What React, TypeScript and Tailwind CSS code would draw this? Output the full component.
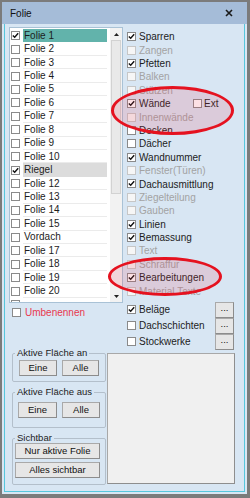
import React from "react";

const folien = [
  "Folie 1", "Folie 2", "Folie 3", "Folie 4", "Folie 5", "Folie 6", "Folie 7",
  "Folie 8", "Folie 9", "Folie 10", "Riegel", "Folie 12", "Folie 13", "Folie 14",
  "Folie 15", "Vordach", "Folie 17", "Folie 18", "Folie 19", "Folie 20", "",
];

// [label, checked, disabled]
const optionen: [string, boolean, boolean][] = [
  ["Sparren", true, false],
  ["Zangen", false, true],
  ["Pfetten", true, false],
  ["Balken", false, true],
  ["Stützen", false, true],
  ["Wände", true, false],
  ["Innenwände", false, true],
  ["Decken", false, false],
  ["Dächer", false, false],
  ["Wandnummer", true, false],
  ["Fenster(Türen)", false, true],
  ["Dachausmittlung", true, false],
  ["Ziegelteilung", false, true],
  ["Gauben", false, true],
  ["Linien", true, false],
  ["Bemassung", true, false],
  ["Text", false, true],
  ["Schraffur", false, true],
  ["Bearbeitungen", true, false],
  ["Material Texte", false, true],
];

function Box({ checked, disabled }: { checked?: boolean; disabled?: boolean }) {
  return (
    <span
      className={`w-[9px] h-[9px] shrink-0 border flex items-center justify-center ${
        disabled ? "border-[#c6c6c6] bg-[#f6f6f6]" : "border-[#8a8a8a] bg-white"
      }`}
    >
      {checked && (
        <svg width="7" height="7" viewBox="0 0 7 7">
          <path d="M0.8 3.4 L2.7 5.3 L6.2 1.2" fill="none" stroke="#111" strokeWidth="1.4" />
        </svg>
      )}
    </span>
  );
}

function Btn({ children, className }: { children: React.ReactNode; className: string }) {
  return (
    <div
      className={`h-[16px] flex items-center justify-center bg-[#e6e6e6] border border-[#a9a9a9] border-b-[#8c8c8c] border-r-[#8c8c8c] text-[9.5px] text-[#111] ${className}`}
    >
      {children}
    </div>
  );
}

export default function App() {
  return (
    <div className="relative w-[250px] h-[498px] bg-[#7b7b7b] pt-[2px] pl-[2px] pr-[3px] pb-[4px] font-['Liberation_Sans',Arial,sans-serif] text-[10px] text-[#1c1c1c]">
      <div className="h-full flex flex-col bg-[#d8e6f3]">
        {/* title bar */}
        <div className="h-[22px] shrink-0 bg-[#a5bcd8] flex items-center justify-between pl-[8px] pr-[14px]">
          <span className="text-[10px] text-[#111]">Folie</span>
          <svg width="8" height="8" viewBox="0 0 8 8">
            <path d="M1 1 L7 7 M7 1 L1 7" stroke="#1a1a1a" strokeWidth="1.6" />
          </svg>
        </div>

        <div className="flex-1 px-[2px] pb-[2px] flex flex-col">
          <div className="flex-1 border-l border-r border-b border-[#56c6dc] pt-[3px] pl-[4px] flex flex-col">
            {/* top section */}
            <div className="flex h-[320px] shrink-0">
              <div className="w-[114px] flex flex-col">
                {/* list */}
                <div className="h-[276px] border border-[#a9c2d6] bg-white flex overflow-hidden">
                  <div className="flex-1 pt-[1px]">
                    {folien.map((f, i) => (
                      <div key={i} className="h-[13.45px] flex items-center pl-[1px]">
                        <Box checked={i === 0 || f === "Riegel"} />
                        <div
                          className={`ml-[3px] w-[84px] h-full flex items-center pl-[1px] border-b ${
                            i === 0
                              ? "bg-[#62b3ab] border-[#62b3ab]"
                              : f === "Riegel"
                              ? "bg-[#dcdcdc] border-[#dcdcdc]"
                              : "border-[#ebebeb]"
                          }`}
                        >
                          {f}
                        </div>
                      </div>
                    ))}
                  </div>
                  {/* scrollbar */}
                  <div className="w-[12px] bg-[#f2f2f2] flex flex-col">
                    <div className="h-[12px] flex items-center justify-center">
                      <svg width="5" height="3" viewBox="0 0 5 3">
                        <path d="M0 3 L2.5 0 L5 3 Z" fill="#222" />
                      </svg>
                    </div>
                    <div className="h-[154px] mx-[1px] bg-[#e9e9e9] border border-[#d2d2d2]" />
                    <div className="flex-1" />
                    <div className="h-[12px] flex items-center justify-center">
                      <svg width="5" height="3" viewBox="0 0 5 3">
                        <path d="M0 0 L2.5 3 L5 0 Z" fill="#222" />
                      </svg>
                    </div>
                  </div>
                </div>
                <div className="mt-[4px] ml-[3px] h-[11px] flex items-center">
                  <Box />
                  <span className="ml-[4px] text-[#e8384f]">Umbenennen</span>
                </div>
              </div>

              {/* right options */}
              <div className="w-[121px] pt-[3px] pl-[4px]">
                {optionen.map(([label, checked, disabled]) => (
                  <div key={label} className="h-[13.4px] flex items-center">
                    <Box checked={checked} disabled={disabled} />
                    <span
                      className={`ml-[3px] ${label === "Wände" ? "w-[54px]" : ""} ${
                        disabled ? "text-[#a3a3a3]" : ""
                      }`}
                    >
                      {label}
                    </span>
                    {label === "Wände" && (
                      <>
                        <Box />
                        <span className="ml-[2px]">Ext</span>
                      </>
                    )}
                  </div>
                ))}
                <div className="mt-[4px] pr-[10px]">
                  {[
                    ["Beläge", true],
                    ["Dachschichten", false],
                    ["Stockwerke", false],
                  ].map(([label, checked]) => (
                    <div key={label as string} className="h-[16px] flex items-center">
                      <Box checked={checked as boolean} />
                      <span className="ml-[3px]">{label}</span>
                      <Btn className="ml-auto w-[19px] pb-[3px]">...</Btn>
                    </div>
                  ))}
                </div>
              </div>
            </div>

            {/* bottom section */}
            <div className="flex">
              <div className="ml-[3px] w-[94px] flex flex-col">
                <fieldset className="border border-[#b3bfcb] rounded-[2px]">
                  <legend className="ml-[2px] px-[2px] leading-[12px] text-[9.5px]">Aktive Fläche an</legend>
                  <div className="flex gap-[5px] pl-[6px] pt-[1px] pb-[5px]">
                    <Btn className="w-[38px]">Eine</Btn>
                    <Btn className="w-[37px]">Alle</Btn>
                  </div>
                </fieldset>
                <fieldset className="mt-[4px] border border-[#b3bfcb] rounded-[2px]">
                  <legend className="ml-[2px] px-[2px] leading-[12px] text-[9.5px]">Aktive Fläche aus</legend>
                  <div className="flex gap-[5px] pl-[5px] pt-[4px] pb-[9px]">
                    <Btn className="w-[39px]">Eine</Btn>
                    <Btn className="w-[38px]">Alle</Btn>
                  </div>
                </fieldset>
                <fieldset className="mt-[4px] border border-[#b3bfcb] rounded-[2px]">
                  <legend className="ml-[2px] px-[2px] leading-[12px] text-[9.5px]">Sichtbar</legend>
                  <div className="flex flex-col gap-[3px] pl-[2px] -mt-[1px] pb-[6px]">
                    <Btn className="w-[85px]">Nur aktive Folie</Btn>
                    <Btn className="w-[85px]">Alles sichtbar</Btn>
                  </div>
                </fieldset>
              </div>
              <div className="ml-[1px] mt-[6px] w-[128px] h-[131px] bg-[#f0f0f0] border border-[#a8a8a8] border-r-[#8e8e8e] border-b-[#8e8e8e]" />
            </div>
          </div>
        </div>
      </div>

      {/* red annotation ellipses */}
      <div className="absolute left-[111px] top-[86px] w-[123px] h-[49px] rounded-[50%] border-[3px] border-[#e5121f] bg-[rgba(235,60,90,0.16)]" />
      <div className="absolute left-[108px] top-[257px] w-[114px] h-[39px] rounded-[50%] border-[3px] border-[#e5121f] bg-[rgba(235,60,90,0.16)]" />
    </div>
  );
}
